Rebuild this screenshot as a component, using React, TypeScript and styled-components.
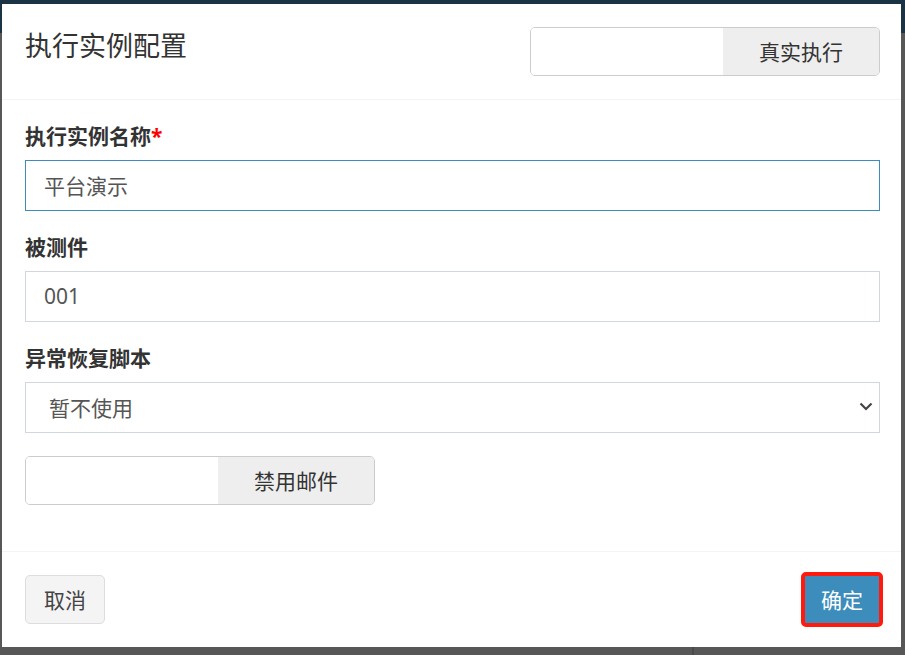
import React from "react";
import styled, { createGlobalStyle } from "styled-components";

const GlobalStyle = createGlobalStyle`
  html, body {
    margin: 0;
    padding: 0;
    background: #575757;
  }
  * {
    box-sizing: border-box;
  }
`;

const FONT = `"Noto Sans", "Noto Sans CJK SC", sans-serif`;

const Page = styled.div`
  position: relative;
  width: 905px;
  height: 655px;
  overflow: hidden;
  background: #575757;
  font-family: ${FONT};
`;

const TopBar = styled.div`
  height: 33px;
  background: #1b3445;
`;

const Divider = styled.div`
  position: absolute;
  left: 692px;
  bottom: 0;
  width: 2px;
  height: 10px;
  background: #4a4a4a;
`;

const Modal = styled.div`
  position: absolute;
  left: 2px;
  top: 4px;
  width: 899px;
  background: #fff;
  display: flex;
  flex-direction: column;
`;

const ModalHeader = styled.div`
  display: flex;
  align-items: center;
  justify-content: space-between;
  padding: 23px 21px 23px 23px;
  border-bottom: 1px solid #f4f4f4;
`;

const ModalTitle = styled.h4`
  margin: 0;
  font-size: 27px;
  font-weight: 400;
  color: #333;
  line-height: 38px;
  align-self: flex-start;
`;

const ModalBody = styled.div`
  padding: 23px 21px 23px 23px;
`;

const FormGroup = styled.div`
  margin-bottom: 23px;
`;

const Label = styled.label`
  display: block;
  font-size: 21px;
  font-weight: 700;
  color: #333;
  line-height: 27px;
  margin-bottom: 10px;
`;

const Required = styled.span`
  color: #ff0000;
`;

const Field = styled.div<{ $focused?: boolean; $indent?: number }>`
  display: flex;
  align-items: center;
  justify-content: space-between;
  height: 51px;
  border: 1px solid ${(p) => (p.$focused ? "#3c8dbc" : "#d2d6de")};
  padding: 0 6px 2px ${(p) => p.$indent ?? 18}px;
  font-size: 21px;
  color: #555;
`;

const Toggle = styled.div`
  display: flex;
  width: 350px;
  height: 49px;
  border: 1px solid #ccc;
  border-radius: 5px;
  overflow: hidden;
`;

const ToggleOn = styled.div`
  flex: 0 0 192px;
  background: #fff;
`;

const ToggleOff = styled.div`
  flex: 1;
  display: flex;
  align-items: center;
  justify-content: center;
  padding-bottom: 2px;
  background: #eee;
  font-size: 21px;
  color: #333;
`;

const ModalFooter = styled.div`
  display: flex;
  align-items: center;
  justify-content: space-between;
  padding: 23px 21px 23px 23px;
  border-top: 1px solid #f4f4f4;
`;

const Button = styled.button<{ $primary?: boolean }>`
  font-family: ${FONT};
  font-size: 21px;
  height: ${(p) => (p.$primary ? "55px" : "49px")};
  margin: ${(p) => (p.$primary ? "-3px -3px -3px 0" : "0")};
  padding: 0 ${(p) => (p.$primary ? "16px" : "18px")} 2px;
  border-radius: 5px;
  cursor: pointer;
  color: ${(p) => (p.$primary ? "#fff" : "#444")};
  background: ${(p) => (p.$primary ? "#3c8dbc" : "#f4f4f4")};
  border: ${(p) => (p.$primary ? "4px solid #ff1a0d" : "1px solid #ddd")};
`;

const Chevron = () => (
  <svg width="14" height="9" viewBox="0 0 14 9" fill="none">
    <path d="M1.5 1.5 L7 7 L12.5 1.5" stroke="#444" strokeWidth="2.2" />
  </svg>
);

export default function App() {
  return (
    <Page>
      <GlobalStyle />
      <TopBar />
      <Divider />
      <Modal>
        <ModalHeader>
          <ModalTitle>执行实例配置</ModalTitle>
          <Toggle>
            <ToggleOn />
            <ToggleOff>真实执行</ToggleOff>
          </Toggle>
        </ModalHeader>
        <ModalBody>
          <FormGroup>
            <Label>
              执行实例名称<Required>*</Required>
            </Label>
            <Field $focused>平台演示</Field>
          </FormGroup>
          <FormGroup>
            <Label>被测件</Label>
            <Field>001</Field>
          </FormGroup>
          <FormGroup>
            <Label>异常恢复脚本</Label>
            <Field $indent={23}>
              暂不使用
              <Chevron />
            </Field>
          </FormGroup>
          <FormGroup>
            <Toggle>
              <ToggleOn />
              <ToggleOff>禁用邮件</ToggleOff>
            </Toggle>
          </FormGroup>
        </ModalBody>
        <ModalFooter>
          <Button>取消</Button>
          <Button $primary>确定</Button>
        </ModalFooter>
      </Modal>
    </Page>
  );
}
